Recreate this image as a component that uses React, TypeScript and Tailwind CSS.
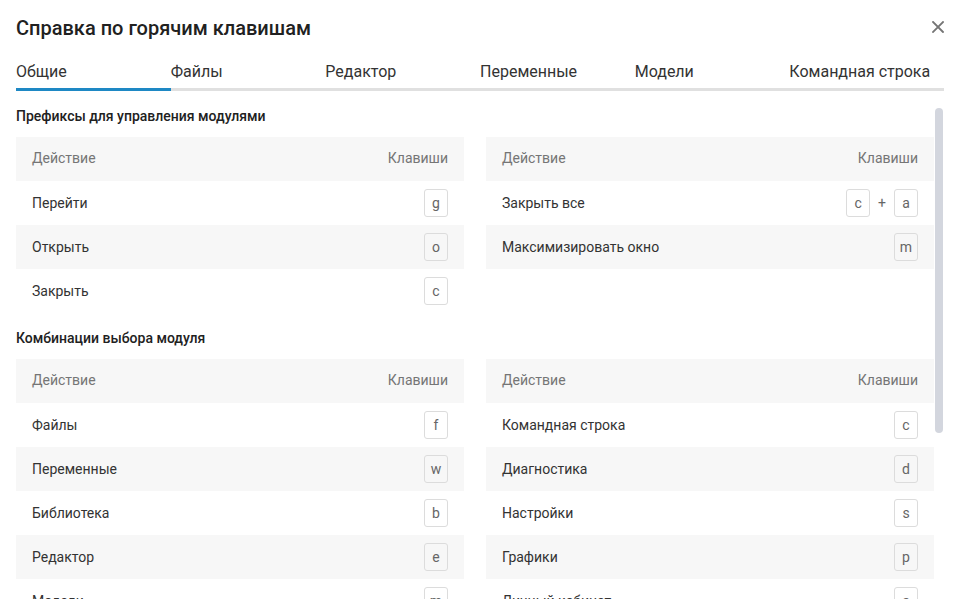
import React from "react";

type Row = { action: string; keys: string[] };

const tabs = ["Общие", "Файлы", "Редактор", "Переменные", "Модели", "Командная строка"];

const sections: { title: string; left: Row[]; right: Row[] }[] = [
  {
    title: "Префиксы для управления модулями",
    left: [
      { action: "Перейти", keys: ["g"] },
      { action: "Открыть", keys: ["o"] },
      { action: "Закрыть", keys: ["c"] },
    ],
    right: [
      { action: "Закрыть все", keys: ["c", "a"] },
      { action: "Максимизировать окно", keys: ["m"] },
    ],
  },
  {
    title: "Комбинации выбора модуля",
    left: [
      { action: "Файлы", keys: ["f"] },
      { action: "Переменные", keys: ["w"] },
      { action: "Библиотека", keys: ["b"] },
      { action: "Редактор", keys: ["e"] },
      { action: "Модели", keys: ["m"] },
    ],
    right: [
      { action: "Командная строка", keys: ["c"] },
      { action: "Диагностика", keys: ["d"] },
      { action: "Настройки", keys: ["s"] },
      { action: "Графики", keys: ["p"] },
      { action: "Личный кабинет", keys: ["a"] },
    ],
  },
];

function Key({ k }: { k: string }) {
  return (
    <span className="inline-flex h-[28px] min-w-[24px] items-center justify-center rounded-[3px] border border-[#dcdcdc] px-[4px] text-[14px] leading-none text-[#666666]">
      {k}
    </span>
  );
}

function Table({ rows }: { rows: Row[] }) {
  return (
    <div className="flex flex-col">
      <div className="flex h-[44px] items-center justify-between bg-[#f7f7f7] px-4 pb-px text-[14px] text-[#757575]">
        <span>Действие</span>
        <span>Клавиши</span>
      </div>
      {rows.map((r, i) => (
        <div
          key={r.action}
          className={
            "flex h-[44px] items-center justify-between px-4 text-[14px] text-[#333333] " +
            (i % 2 === 1 ? "bg-[#f7f7f7]" : "bg-white")
          }
        >
          <span>{r.action}</span>
          <span className="flex items-center">
            {r.keys.map((k, j) => (
              <React.Fragment key={k + j}>
                {j > 0 && <span className="mx-[8px] text-[14px] text-[#666666]">+</span>}
                <Key k={k} />
              </React.Fragment>
            ))}
          </span>
        </div>
      ))}
    </div>
  );
}

export default function App() {
  return (
    <div
      className="flex h-[615px] w-[960px] flex-col overflow-hidden bg-white pl-4 pr-4"
      style={{ fontFamily: "Roboto, 'Noto Sans', sans-serif" }}
    >
      <div className="flex h-[56px] items-center justify-between">
        <h1 className="text-[20px] font-medium text-[#212121]">Справка по горячим клавишам</h1>
        <svg width="12" height="12" viewBox="0 0 12 12" className="mb-[2px]">
          <path d="M1 1 L11 11 M11 1 L1 11" stroke="#757575" strokeWidth="1.8" strokeLinecap="square" />
        </svg>
      </div>
      <div className="flex border-b-[3px] border-[#e0e0e0]">
        {tabs.map((t, i) => (
          <div
            key={t}
            className={
              "-mb-[3px] flex-1 border-b-[3px] pb-1 pt-1 text-[16px] leading-6 text-[#333333] " +
              (i === 0 ? "border-[#1e88c4]" : "border-transparent")
            }
          >
            {t}
          </div>
        ))}
      </div>
      <div className="mt-[17px] flex h-[491px] overflow-hidden">
        <div className="w-[918px] overflow-hidden">
          {sections.map((s, idx) => (
            <div key={s.title} className={idx > 0 ? "mt-[17px]" : ""}>
              <div className="mb-[13px] text-[14px] font-medium leading-4 text-[#212121]">{s.title}</div>
              <div className="grid grid-cols-2 items-start gap-x-[22px]">
                <Table rows={s.left} />
                <Table rows={s.right} />
              </div>
            </div>
          ))}
        </div>
        <div className="ml-px w-2">
          <div className="h-[325px] w-2 rounded-full bg-[#d3d6de]" />
        </div>
      </div>
    </div>
  );
}
